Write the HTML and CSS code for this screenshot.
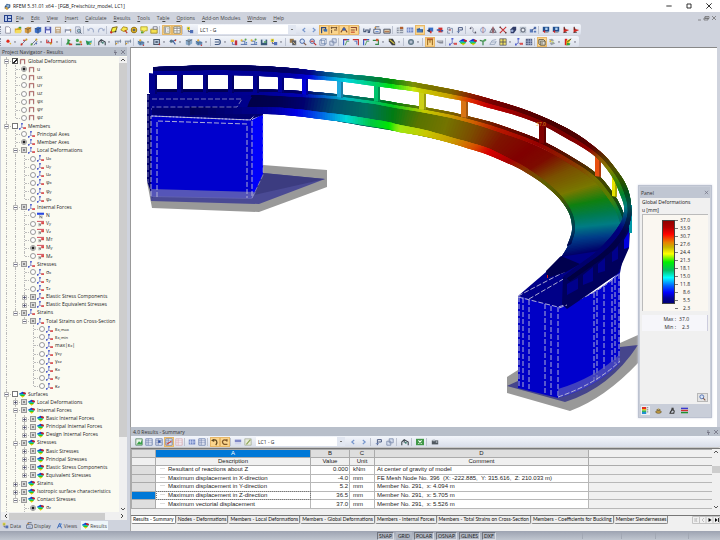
FILE: index.html
```html
<!DOCTYPE html>
<html lang="en">
<head>
<meta charset="utf-8">
<title>RFEM 5.31.01 x64 - [FGB_Freischütz_model, LC1]</title>
<link rel="stylesheet" href="styles.css">
</head>
<body>
<header class="titlebar">
  <svg class="logo" viewBox="0 0 10 10" aria-hidden="true"><path d="M1 5 4 1l5 1v4L5 9 1 8z" fill="#345a8c"/><path d="M3 3l4-1 1 3-3 2z" fill="#8fb0d0"/><path d="M1 7l3-2 2 4-2 1z" fill="#d9a33a"/></svg>
  <h1>RFEM 5.31.01 x64 - [FGB_Freischütz_model, LC1]</h1>
  <div class="window-buttons">
    <button aria-label="Minimize"><svg viewBox="0 0 6 6"><path d="M1 3h4" stroke="#222" stroke-width=".7"/></svg></button>
    <button aria-label="Maximize"><svg viewBox="0 0 6 6"><path d="M1.5 1.5h3v3h-3z" fill="none" stroke="#222" stroke-width=".7"/></svg></button>
    <button aria-label="Close"><svg viewBox="0 0 6 6"><path d="M1 1l4 4M5 1 1 5" stroke="#222" stroke-width=".7"/></svg></button>
  </div>
</header>
<nav class="menubar">
  <svg class="doc-logo" viewBox="0 0 8 7" aria-hidden="true"><path d="M0 0h8v7H0z" fill="#24408c"/><path d="M1 1h2v5H1zM4 1h3v2H4zM4 4h3v2H4z" fill="#b8c8e8"/></svg>
  <a href="#"><u>F</u>ile</a><a href="#"><u>E</u>dit</a><a href="#"><u>V</u>iew</a><a href="#"><u>I</u>nsert</a><a href="#"><u>C</u>alculate</a><a href="#"><u>R</u>esults</a><a href="#"><u>T</u>ools</a><a href="#">Ta<u>b</u>le</a><a href="#"><u>O</u>ptions</a><a href="#"><u>A</u>dd-on Modules</a><a href="#"><u>W</u>indow</a><a href="#"><u>H</u>elp</a>
  <span class="doc-buttons"><svg viewBox="0 0 20 6"><path d="M1 5h3M8 1.500h4v2H8zM7 3h4v2H7zM15 1l4 4M19 1l-4 4" fill="none" stroke="#666" stroke-width=".7"/></svg></span>
</nav>
<div class="toolbars">
  <div class="toolbar">
    <div class="tools" data-tools="| new open boxo boxb save calc print preview | undo redo | poly find globe note folder | *list *table | lc"></div>
    <select class="case" aria-label="Load case"><option>LC1 - G</option></select>
    <div class="tools" data-tools="prev next *xray *dims *loadx *values | glasses boxval boxval2 | grid mesh *view arrowb arrowr num flag | link circ tri cross cyl ring rel | panelb panelb pin pin"></div>
  </div>
  <div class="toolbar">
    <div class="tools" data-tools="| node . line line2 . load . | tree1 tree2 surf | struct . wave wave | solid . frame . axis . cube solid . | conn . lc2 dots dots book lc . | iso zoomin zoomout wire copy | corner1 corner2 corner1 corner3 . render . | gear . | *bars strip | axes rain rain green beam grid4 . axes grid5 | *cubey layers . spect ."></div>
  </div>
</div>
<div class="workspace">
  <aside class="navigator">
    <h2 class="pane-title">Project Navigator - Results<span class="pane-buttons"><svg viewBox="0 0 12 6"><path d="M2 1v3M1 3.500h3M2.500 4v2M8 1l4 4M12 1 8 5" stroke="#667" stroke-width=".7" fill="none"/></svg></span></h2>
    <div class="tree-area">
      <div class="tree" id="tree"></div>
      <div class="vscroll"><svg viewBox="0 0 8 6"><path d="M2 4l2-2 2 2" fill="none" stroke="#555"/></svg><i class="thumb"></i><svg viewBox="0 0 8 6"><path d="M2 2l2 2 2-2" fill="none" stroke="#555"/></svg></div>
    </div>
    <div class="hscroll"><svg viewBox="0 0 6 6"><path d="M4 1 2 3l2 2" fill="none" stroke="#444"/></svg><i class="thumb"></i><svg viewBox="0 0 6 6"><path d="M2 1l2 2-2 2" fill="none" stroke="#444"/></svg></div>
    <div class="nav-tabs">
      <button><svg data-icon="lc"></svg>Data</button><button><svg data-icon="boxval"></svg>Display</button><button><svg data-icon="camera"></svg>Views</button><button class="active"><svg data-icon="rain"></svg>Results</button>
    </div>
  </aside>
  <main class="main">
    <section class="viewport">
      <svg class="model" id="model" viewBox="131 48 586 380" preserveAspectRatio="xMinYMin meet" role="img" aria-label="Bridge deformation model"></svg>
      <div class="panel">
        <h2 class="panel-title">Panel<svg viewBox="0 0 6 6"><path d="M1 1l4 4M5 1 1 5" stroke="#667" stroke-width=".7"/></svg></h2>
        <div class="panel-body">
          <p>Global Deformations</p>
          <p>u [mm]</p>
          <div class="scale">
            <div class="bar"></div>
            <ol><li>37.0</li><li>33.9</li><li>30.7</li><li>27.6</li><li>24.4</li><li>21.3</li><li>18.1</li><li>15.0</li><li>11.8</li><li>8.6</li><li>5.5</li><li>2.3</li></ol>
          </div>
          <dl class="extremes"><dt>Max :</dt><dd>37.0</dd><dt>Min :</dt><dd>2.3</dd></dl>
          <button class="inspect" aria-label="Details"><svg data-icon="zoomin"></svg></button>
        </div>
        <div class="panel-tabs"><button class="active" aria-label="Color scale"><svg data-icon="scale"></svg></button><button aria-label="Factors"><svg data-icon="balance"></svg></button><button aria-label="Filter"><svg data-icon="scope"></svg></button><button aria-label="Lines"><svg data-icon="stripes"></svg></button></div>
      </div>
    </section>
    <section class="results">
      <h2 class="pane-title">4.0 Results - Summary<span class="pane-buttons"><svg viewBox="0 0 12 6"><path d="M2 1v3M1 3.500h3M2.500 4v2M8 1l4 4M12 1 8 5" stroke="#667" stroke-width=".7" fill="none"/></svg></span></h2>
      <div class="toolbar table-tools">
        <div class="tools" data-tools="chart sheet sheetd *sheetr sheetp | mesh sheet | *undoy *redoy | stripe pencil"></div>
        <select class="case" aria-label="Result case"><option>LC1 - G</option></select>
        <div class="tools spaced" data-tools="prev next | flag copy | struct | excel | scan"></div>
      </div>
      <div class="table-area">
        <table>
          <colgroup><col class="c-head"><col class="c-desc"><col class="c-value"><col class="c-unit"><col class="c-comment"><col></colgroup>
          <thead>
            <tr class="letters"><th></th><th class="selected">A</th><th>B</th><th>C</th><th>D</th><th></th></tr>
            <tr><th></th><th>Description</th><th>Value</th><th>Unit</th><th>Comment</th><th></th></tr>
          </thead>
          <tbody>
            <tr><th></th><td>Resultant of reactions about Z</td><td>0.000</td><td>kNm</td><td>At center of gravity of model</td><td></td></tr>
            <tr><th></th><td>Maximum displacement in X-direction</td><td>-4.0</td><td>mm</td><td>FE Mesh Node No. 396&nbsp; (X: -222.885,&nbsp; Y: 315.616,&nbsp; Z: 210.033 m)</td><td></td></tr>
            <tr><th></th><td>Maximum displacement in Y-direction</td><td>5.2</td><td>mm</td><td>Member No. 291,&nbsp; x: 4.094 m</td><td></td></tr>
            <tr class="current"><th></th><td>Maximum displacement in Z-direction</td><td>36.5</td><td>mm</td><td>Member No. 291,&nbsp; x: 5.705 m</td><td></td></tr>
            <tr><th></th><td>Maximum vectorial displacement</td><td>37.0</td><td>mm</td><td>Member No. 291,&nbsp; x: 5.526 m</td><td></td></tr>
          </tbody>
        </table>
        <div class="vscroll"><svg viewBox="0 0 8 6"><path d="M2 4l2-2 2 2" fill="none" stroke="#555"/></svg><i class="thumb"></i><svg viewBox="0 0 8 6"><path d="M2 2l2 2 2-2" fill="none" stroke="#555"/></svg></div>
      </div>
      <div class="sheet-tabs">
        <button class="active">Results - Summary</button><button>Nodes - Deformations</button><button>Members - Local Deformations</button><button>Members - Global Deformations</button><button>Members - Internal Forces</button><button>Members - Total Strains on Cross-Section</button><button>Members - Coefficients for Buckling</button><button>Member Slendernesses</button>
        <span class="pager"><svg viewBox="0 0 28 8"><path d="M.5.500h27v7H.5zM7.500.500v7M14 .500v7M21 .500v7" fill="none" stroke="#c4c4c4"/><path d="M3 2v4M5 2 4 4l1 2M12 2l-2 2 2 2" stroke="#aaa" fill="none" stroke-width=".7"/><path d="M16.500 2l3 2-3 2zM23 2l2.500 2L23 6zM26 2h.8v4H26z"/></svg></span>
      </div>
    </section>
  </main>
</div>
<footer class="status"><button>SNAP</button><button class="off">GRID</button><button>POLAR</button><button>OSNAP</button><button>GLINES</button><button>DXF</button><span></span><span></span><span></span><span></span></footer>
<script src="app.js"></script>
</body>
</html>
```
FILE: styles.css
```css
* { box-sizing: border-box; }
body {
  margin: 0;
  height: 100vh;
  display: flex;
  flex-direction: column;
  background: #cfd3dd;
  color: #222;
  font: 5px/8px "Open Sans", "Noto Sans", sans-serif;
  overflow: hidden;
}
h1, h2, p, ol, dl, dd { margin: 0; padding: 0; font: inherit; }
button { border: 0; padding: 0; background: none; font: inherit; color: inherit; }
svg { display: block; flex: none; }
a { color: inherit; text-decoration: none; }

.titlebar { display: flex; align-items: center; height: 12px; flex: none; padding: 0 4px; background: #fff; gap: 2px; color: #111; }
.logo { width: 7px; height: 7px; }
.window-buttons { margin-left: auto; display: flex; gap: 12px; padding-right: 3px; }
.window-buttons svg { width: 8px; height: 8px; }
.menubar { display: flex; align-items: center; height: 12px; flex: none; padding: 0 3px 0 4px; gap: 7px; color: #444; }
.doc-logo { width: 8px; height: 7px; margin-right: -3px; }
.doc-buttons { margin-left: auto; }
.doc-buttons svg { width: 20px; height: 6px; }

.toolbars { flex: none; height: 23px; }
.toolbar { display: flex; align-items: center; height: 11px; width: max-content; background: linear-gradient(#f3f6fb, #d9deea); border-radius: 0 2px 2px 0; margin-bottom: 1px; }
.tools { display: flex; align-items: center; }
.tools button { width: 10px; height: 10px; display: flex; align-items: center; justify-content: center; }
.tools svg { width: 8px; height: 8px; }
.tools .on { background: #fbd58c; border: 1px solid #e8b868; }
.tools i { width: 3px; height: 8px; border-left: 1px solid #bcc2d0; }
.tools i:first-child { border-left: 1px dotted #8890a4; }
.tools .drop { width: 6px; height: 8px; display: flex; align-items: center; }
.tools .drop svg { width: 4px; height: 4px; }
.spaced { gap: 1px; }
.case { appearance: none; border: 0; margin: 0 3px 0 3px; padding: 0 2px; width: 98px; height: 9px; color: #222; font: inherit; border-radius: 0;
  background: linear-gradient(#777, #777) right 3px center / 2px 1px no-repeat, linear-gradient(#e2e7f1, #e2e7f1) right / 8px no-repeat, #fff; }

.workspace { flex: 1; min-height: 0; display: flex; }
.navigator { width: 127px; flex: none; margin-right: 3px; display: flex; flex-direction: column; min-height: 0; }
.pane-title { display: flex; align-items: center; height: 9px; flex: none; padding: 0 2px; background: #b8bfca; color: #333; }
.pane-buttons { margin-left: auto; }
.pane-buttons svg { width: 12px; height: 6px; }
.tree-area { flex: 1; min-height: 0; display: flex; background: #fbfbf2; margin-left: 1px; padding-top: 1px; }
.tree { flex: 1; min-width: 0; display: grid; grid-auto-rows: 1fr; padding-left: 1px; overflow: hidden; }
.row { display: flex; align-items: center; min-height: 0; line-height: 7px; white-space: nowrap; color: #222; }
.guide { position: relative; width: 9px; align-self: stretch; flex: none; }
.guide.line::before { content: ""; position: absolute; left: 4px; top: 0; bottom: 0; border-left: 1px dotted #bbb; }
.guide.end::before { bottom: 50%; }
.guide.dash::after { content: ""; position: absolute; left: 5px; right: 0; top: 50%; border-top: 1px dotted #bbb; }
.twist { position: absolute; left: 2px; top: 2px; width: 5px; height: 5px; z-index: 1; }
.row input { appearance: none; flex: none; margin: 0 1px; width: 6px; height: 6px; border: 1px solid #777; background: #fff; }
.row input[type=radio] { border-radius: 50%; border-color: #999; }
.row input[type=radio]:checked { background: radial-gradient(circle, #222 0 1px, #fff 2px); }
.row input.mixed { background: #888; border-color: #999; box-shadow: inset 0 0 0 1px #d8d8d8; }
.row input[type=checkbox]:checked { background: linear-gradient(135deg, #fff 40%, #222 40% 65%, #fff 65%); border-color: #555; }
.row svg.icon { width: 7px; height: 7px; margin-right: 2px; }
.vscroll { width: 8px; flex: none; display: flex; flex-direction: column; background: #f0f0f0; }
.vscroll svg { width: 8px; height: 6px; }
.thumb { background: #cdcdcd; }
.tree-area .thumb { height: 374px; margin-bottom: auto; }
.hscroll { display: flex; align-items: center; height: 8px; margin-left: 1px; background: #f0f0f0; flex: none; padding: 0 2px; }
.hscroll svg { width: 6px; height: 6px; }
.hscroll .thumb { width: 96px; height: 7px; margin-right: auto; }
.nav-tabs { display: flex; align-items: center; gap: 3px; height: 11px; padding: 0 1px; flex: none; }
.nav-tabs button { display: flex; align-items: center; gap: 1px; height: 9px; padding: 0 1px; color: #444; }
.nav-tabs .active { background: #eef6fa; }
.nav-tabs svg { width: 7px; height: 7px; }

.main { flex: 1; min-width: 0; display: flex; flex-direction: column; }
.viewport { position: relative; flex: 1; min-height: 0; background: #fff; border-top: 1px solid #888; border-left: 1px solid #999; margin-right: 3px; overflow: hidden; }
.model { width: 100%; }
.panel { position: absolute; right: 5px; top: 137px; width: 74px; height: 233px; background: #c9ced9; border: 1px solid #bcc2d0; padding: 1px; display: flex; flex-direction: column; box-shadow: 0 0 2px #d0d4e4; }
.panel-title { display: flex; justify-content: space-between; align-items: center; height: 11px; padding: 0 1px; flex: none; background: #c0c6d2; color: #333; }
.panel-title svg { width: 5px; height: 5px; }
.panel-body { background: #f0f0f0; flex: 1; padding: 0 2px; display: flex; flex-direction: column; }
.panel-body p { line-height: 8px; color: #111; }
.scale { display: flex; height: 97px; margin-bottom: 4px; padding: 5px 0 7px 19px; background: #faf7f1; border-top: 1px solid #bbb; border-left: 1px solid #bbb; }
.bar { width: 13px; border: 1px solid #444; background: linear-gradient(#900000, #b40000 8%, #ff0000 16%, #e88000 26%, #c8b400 32%, #ffff00 40%, #00f000 50%, #00c060 60%, #00ffff 69%, #0060ff 79%, #0000ff 87%, #000098 94%, #000078); }
.scale ol { list-style: none; display: flex; flex-direction: column; justify-content: space-between; margin: -4px 0; }
.scale li { display: flex; align-items: center; justify-content: flex-end; width: 15px; line-height: 8px; }
.scale li::before { content: ""; width: 3px; border-top: 1px solid #777; margin-right: auto; }
.extremes { display: grid; grid-template-columns: 34px 13px; text-align: right; height: 16px; background: #f6f6fa; border-right: 1px solid #ccd; }
.inspect { margin: auto 0 2px auto; width: 11px; height: 9px; border: 1px solid #b8b8b8; background: #e4e4e4; display: flex; justify-content: center; align-items: center; }
.inspect svg { width: 7px; height: 7px; }
.panel-tabs { display: flex; gap: 4px; height: 12px; align-items: center; padding: 0 1px; }
.panel-tabs button { width: 9px; height: 9px; display: flex; align-items: center; justify-content: center; }
.panel-tabs .active { background: #eceef4; }
.panel-tabs svg { width: 7px; height: 7px; }

.results { flex: none; height: 104px; display: flex; flex-direction: column; border-left: 1px solid #aaa; background: #f0f0f0; }
.table-tools { width: auto; height: 12px; flex: none; padding-left: 3px; border-bottom: 1px solid #c8c8c8; margin: 0; }
.table-tools .case { width: 89px; }
.table-area { flex: none; height: 62px; display: flex; border-top: 1px solid #777; }
table { flex: 1; height: 60px; border-collapse: collapse; table-layout: fixed; font: 6px/7px "Liberation Sans", Arial, sans-serif; color: #222; }
.c-head { width: 24px; }
.c-desc { width: 155px; }
.c-value { width: 39px; }
.c-unit { width: 25px; }
.c-comment { width: 214px; }
th, td { padding: 0 3px; border: 1px solid #ababab; font-weight: normal; white-space: nowrap; }
th { background: #f0f0f0; }
.letters th, tbody th { background: #dedede; }
.letters .selected, .current th { background: #0078d7; color: #fff; }
td { background: #fff; border-color: #b8b8b8; }
td:last-child, th:last-child { background: #f0f0f0; border-right: 0; }
td:nth-child(2) { padding-left: 4px; }
td:nth-child(2)::before { content: ""; display: inline-block; width: 5px; margin-right: 3px; border-top: 1px solid #ddd; vertical-align: 2px; }
td:nth-child(3) { text-align: right; padding-right: 1px; }
td:nth-child(5) { padding-left: 2px; }
.current td:nth-child(2) { outline: 1px dotted #777; outline-offset: -1px; }
.table-area .thumb { height: 7px; margin: 11px 0 auto; }
.sheet-tabs { display: flex; align-items: flex-start; margin-top: 5px; flex: none; border-top: 1px solid #777; font: 5px/7px Lato, "Liberation Sans", sans-serif; color: #111; white-space: nowrap; }
.sheet-tabs button { height: 8px; padding: 0 1px; border: 1px solid #888; border-top: 0; border-left-color: #ddd; border-radius: 0 0 2px 2px; background: #eee; flex: none; }
.sheet-tabs .active { background: #fff; }
.pager { margin-left: auto; }
.pager svg { width: 28px; height: 8px; }
.status { flex: none; height: 9px; display: flex; align-items: center; gap: 2px; padding-left: 377px; background: linear-gradient(#9da3b1, #c0c6d0); font: 5px/6px Lato, "Liberation Sans", sans-serif; }
.status button { height: 8px; padding: 0 1px; border: 1px solid; border-color: #70747e #d8dce4 #d8dce4 #70747e; background: #b0b6c2; }
.status .off { border-color: transparent; }
.status span { width: 33px; height: 7px; border-left: 1px solid #a2a8b4; }
.status span:nth-of-type(1) { margin-left: 84px; }
.status span:nth-of-type(2) { margin-left: 6px; }
```
FILE: app.js
```js
// Icon artwork on a 10 x 10 grid
const sheet = '<path d="M1 1h8v8H1z" fill="#f4f6fc" stroke="#6478a8"/><path d="M1 3.500h8M1 6h8M4 1v8" stroke="#6478a8" stroke-width=".8"/>';
const dot = (x, y, c, r = 1.3) => `<circle cx="${x}" cy="${y}" r="${r}" fill="${c}"/>`;
const ln = (d, c, w = 1) => `<path d="${d}" fill="none" stroke="${c}" stroke-width="${w}"/>`;
const fl = (d, c) => `<path d="${d}" fill="${c}"/>`;
const box = c => fl('M1 3l4-2 4 1v5L5 9.500 1 8z', c) + ln('M1 3l4 1 4-2M5 4v5.500', '#333', .6);
const rain = fl('M0 4l5-3 5 2-1 2H1z', '#1434d0') + fl('M0 4h5l4 1-1 1.500H2z', '#18c0d0') + fl('M1 5.500h8L7 7.500H3z', '#30c820') + fl('M3 7h5L5 9.500z', '#e8c800') + fl('M6 1.500l4 1.500-1 2-3-1z', '#d82010');
const axes = ln('M4 1v5L1 8.500', '#5060c8') + ln('M4 6l3 1.500', '#8088b0') + fl('M6 6h4v2.500H6z', '#d85050') + fl('M0 7h2v2.500H0zM3 0h2.500v2H3z', '#5060d0');
const ICONS = {
  new: '<path d="M2 1h4l2 2v6H2z" fill="#fff" stroke="#889"/>',
  open: fl('M1 3h3l1-1h4v6H1z', '#d8a820') + fl('M2 5h8L8 9H1z', '#f4dc60') + fl('M6 1h3v2H6z', '#40a040'),
  boxo: box('#d89c40'), boxb: box('#3c70c8'),
  save: fl('M1 1h8v8H1z', '#5058b0') + fl('M3 1h4v3H3z', '#c8d0f0') + fl('M2.500 5.500h5V9h-5z', '#eef'),
  calc: fl('M1.500 1h7v8h-7z', '#b89870') + fl('M2.500 2h5v2h-5z', '#f8f0e0') + ln('M3 5.500h4M3 7.500h4', '#eee'),
  print: fl('M1 4h8v4H1z', '#8890a8') + fl('M3 1h4v3H3zM2.500 6h5v3h-5z', '#f4f6fc') + dot(8, 5, '#e8a030', .8),
  preview: fl('M2 1h5l1 2v6H2z', '#e4e8f4') + ln('M2 1h5l1 2v6H2z', '#8088a0', .8) + `<circle cx="6" cy="6" r="2" fill="#acd" stroke="#456" stroke-width=".8"/>` + ln('M7.500 7.500l2 2', '#456'),
  undo: ln('M2 5c2-4 7-2 6 3', '#a4b0cc', 1.4) + fl('M0 3l1 4 3-2z', '#a4b0cc'),
  redo: ln('M8 5C6 1 1 3 2 8', '#a4b0cc', 1.4) + fl('M10 3l-1 4-3-2z', '#a4b0cc'),
  poly: '<path d="M1 8l2-6 6-1-2 6z" fill="#f4f040" stroke="#806810" stroke-width="1.2"/>' + dot(1.5, 8, '#d02020') + dot(7, 7, '#303030', 1),
  find: '<path d="M1 5l3-4 5 1v3L5 7z" fill="#f8e850" stroke="#a08010"/>' + ln('M6 5l3 4', '#c03020', 1.4),
  globe: '<circle cx="5" cy="5" r="3.500" fill="#f0d040" stroke="#907010" stroke-width="1.2"/>' + ln('M5 2v6M2 5h6', '#a06010') + dot(5, 5, '#306090', 1.2),
  note: '<path d="M1 1h8v5H6L4 9V6H1z" fill="#f8f060" stroke="#b0a020"/>' + dot(2.5, 8, '#50a030'),
  folder: '<path d="M1 4h8v5H1z" fill="#f4e050" stroke="#a08820"/>' + '<path d="M4 1h5v3H4z" fill="#fff" stroke="#667"/>',
  list: '<path d="M1.500 1h7v8h-7z" fill="#fff" stroke="#886"/>' + fl('M2 1.500h2v7H2z', '#a0a0a8') + ln('M5 3h3M5 5h3M5 7h3', '#999', .7),
  table: '<path d="M1 1h8v8H1z" fill="#fff" stroke="#776"/>' + ln('M1 3h8M1 6h8M5 1v8', '#888'),
  lc: fl('M1 1h4v4H1z', '#f0d040') + dot(3, 3, '#50a050', 1) + fl('M5 5h4v4H5z', '#5070b8') + ln('M3 5v2h2', '#446'),
  lc2: fl('M1 2h4v3H1z', '#f0c040') + fl('M6 3h3v6H6z', '#c03040') + ln('M3 5v3h3', '#5060a0'),
  prev: ln('M6.500 2.500 3.500 5l3 2.500', '#7494cc', 1.4), next: ln('M3.500 2.500 6.500 5l-3 2.500', '#7494cc', 1.4),
  xray: ln('M2 9V2h5v3H4', '#304878', 1.5) + fl('M5 4h4v3H5z', '#3870b8'),
  dims: ln('M1 2h8M2 1v3M8 1v3M2 5v4M5 5h4', '#705030', 1.2),
  loadx: ln('M1 8l4-6 4 6', '#804828', 1.3) + dot(5, 4, '#4060a8', 2),
  values: ln('M1 2h7v4M1 5h5', '#904830', 1.3) + fl('M1 7h5v1.500H1z', '#c85030'),
  glasses: ln('M1 3v4h2.500V5h3v3H8l1-5', '#485878', 1.4),
  boxval: '<path d="M1 4h8v5H1z" fill="#e8ecf4" stroke="#3a4660"/>' + ln('M3 4V1h5', '#3a4660') + ln('M3 7h4', '#3868c0') + dot(3, 2, '#e09030', 1),
  boxval2: '<path d="M1 4h8v5H1z" fill="#d8c8a8" stroke="#3a4660"/>' + ln('M2 7h6', '#a85830'),
  grid: fl('M1 2h8v7H1z', '#8890a0') + ln('M1 4h8M1 7h8M4 2v7', '#e8ecf0') + fl('M5 1h4v3H5z', '#b06030'),
  mesh: fl('M1 2h8v6H1z', '#5870b8') + ln('M1 4h8M1 6h8M3 2v6M6 2v6', '#e0e8ff', .8),
  view: fl('M1 4l5-2 3 2-1 4H1z', '#4878b8') + ln('M1 4h7v4', '#284878') + fl('M5 1h4v3H5z', '#d8e8f8'),
  arrowb: fl('M3 2h6v5H3z', '#3870c8') + fl('M1 6l4-3v5z', '#303c60') + fl('M5 6h2v3H5z', '#c83030'),
  arrowr: fl('M3 2h5v6H3z', '#d03030') + fl('M1 4h4v2H1zM6 5h3v2H6z', '#3858a8'),
  num: ln('M2 2h3v3H2zM6 3h2v6M2 6v3h3', '#7080a0') + fl('M4 4h2v2H4z', '#c06060'),
  flag: ln('M3 9V2h5v3H4', '#485880', 1.2) + ln('M1 7h4', '#7088b8'),
  link: ln('M1 3c2-3 5-1 4 2s1 4 4 4', '#889', 1) + dot(2, 3, '#556', 1) + dot(8, 8, '#556', 1),
  circ: '<circle cx="5" cy="5" r="3" fill="none" stroke="#7894cc"/>' + ln('M5 1v8', '#c06050', .8),
  tri: ln('M5 1v8M4 3 1 8h3zM6 3l3 5H6z', '#556', 1) + ln('M5 1v8', '#c03030', .8),
  cross: ln('M1 1l8 8M9 1 1 9', '#c83030', 1.3) + dot(1.500, 1.500, '#404040', 1) + dot(8.500, 8.500, '#404040', 1),
  cyl: fl('M2 4l3-3h4v4L6 9H2z', '#303c68') + dot(4, 6, '#a0b0d8', 1.6),
  ring: fl('M1 1h8v8H1z', '#b8c0cc') + '<circle cx="5" cy="5" r="2.500" fill="#e8ecf4" stroke="#404858"/>',
  rel: fl('M1 4h4v4H1zM6 1h3v3H6zM6 6h3v2H6z', '#5878b8') + ln('M4 5l4-3', '#384878'),
  panelb: fl('M1 1h8v6H1z', '#1f4f90') + fl('M4 2h3v3H4z', '#b0d0f0') + fl('M1 7l3-2v4z', '#d02020') + ln('M4 8h4', '#888'),
  pin: fl('M2 1l3 3 4 1-4 2-3 2z', '#d02820') + ln('M2 8l4 0M3 1v4', '#333'),
  node: dot(5, 4, '#e02818', 2) + dot(8, 7, '#e0b030', 1),
  line: ln('M1 9l7-7', '#586078') + dot(2, 8, '#d03020') + dot(8, 2, '#d0a020') + dot(5, 3, '#d02020', 1),
  line2: ln('M1 9l7-7M5 9l4-5', '#586078') + dot(2, 8, '#58a040') + dot(8, 2, '#d0a020') + dot(8, 7, '#4870c0', 1),
  load: ln('M1 2v4h6V1', '#d03030', 1.4) + dot(6, 7, '#c89820') + dot(3, 4, '#506080', 1),
  tree1: fl('M3 1l4 2-2 2 3 3H1l2-3z', '#389848') + fl('M5 7h4v2H5z', '#d04030'),
  tree2: dot(3, 3, '#48a050', 2) + dot(7, 5, '#d09030', 1.5) + fl('M1 7h6v2H1z', '#308060') + dot(8, 8, '#d03030', 1),
  surf: fl('M1 3l4 1 4-1-2 6-5-1z', '#48b0a0') + fl('M1 3l5 3-3 3z', '#309048') + dot(7, 7, '#e0c030', 1),
  struct: ln('M1 9V5l3-3 5 3v4M4 2v4', '#384048', 1.3) + dot(6, 6, '#408070'),
  wave: ln('M1 4h8M2 4v5M5 4v3M8 2v4', '#78869c', 1.2) + dot(3, 7, '#e0a020', 1),
  solid: fl('M1 4l4-1 4 2v4H3L1 7z', '#7098c0') + ln('M1 4l3 2h5M4 6v3', '#385878', .8) + dot(4, 3, '#e8a830', 1.3) + dot(8, 9, '#d03030', .9),
  frame: '<path d="M1 2h7v6H1z" fill="#b8c8dc" stroke="#48586c" stroke-width="1.300"/>' + fl('M3 4h3v2H3z', '#405068') + dot(8, 8, '#c03030', 1),
  axis: ln('M1 4h4l3 4M5 4l4-2', '#4060a0', 1.4) + dot(3, 4, '#507088', 2) + dot(8, 3, '#d04030', 1),
  cube: box('#88a8c8'), conn: ln('M1 2h4c4 0 4 6 0 6H1M1 5h6', '#405880', 1.3),
  dots: ln('M1 8h8M2 4h4v4', '#5070a8', 1.2) + dot(7, 2, '#58a850') + dot(2, 3, '#e0b030') + dot(8, 6, '#4878c0', 1),
  book: fl('M1 2h8v7H1z', '#385878') + fl('M3 1h4v5H3z', '#d8e4f0') + fl('M5 4h3v2H5z', '#58a868'),
  iso: fl('M1 1h5v5H1z', '#98784c') + fl('M4 3h5v6H4z', '#585c64') + ln('M5 5l3 3', '#e0c080'),
  zoomin: '<circle cx="4" cy="4" r="2.800" fill="#d8e4f8" stroke="#4868a8" stroke-width="1.200"/>' + ln('M6 6l3 3', '#805848', 1.5),
  zoomout: '<circle cx="4" cy="4" r="2.800" fill="#f0d8d8" stroke="#4868a8" stroke-width="1.200"/>' + ln('M6 6l3 3M2 4h4', '#c02828', 1.4),
  wire: ln('M1 3h6v6H1zM3 1h6v6M1 3l2-2M7 3l2-2M7 9l2-2M3 1v6h6', '#6880a8', .8),
  copy: '<path d="M1 4h5v5H1zM4 1h5v5H4z" fill="#d8e0f0" stroke="#7888a8"/>',
  corner1: ln('M2 9V2h7', '#3858c8', 1.4) + ln('M2 2h4', '#c02828', 1.6) + ln('M4 9l2-5h3', '#389048'),
  corner2: ln('M1 2h7v7', '#c83030', 1.4) + ln('M3 4h3v4', '#3858b8'),
  corner3: ln('M1 3h7v5H4', '#388848', 1.4) + fl('M5 1h3v3H5z', '#d05030'),
  render: fl('M1 1h5l3 5v3H5L1 4z', '#404040') + ln('M2 2l6 5', '#e0d040', 1.5),
  gear: '<circle cx="5" cy="5" r="3" fill="#98a8b8" stroke="#607888" stroke-width="1.500"/>' + dot(5, 5, '#dde', 1),
  bars: ln('M2 9V2h6v7M5 2v4', '#a07028', 1.4) + ln('M1 1h8', '#c03020'),
  strip: fl('M1 3h8v4H5L1 5z', '#888c98') + ln('M2 4h6', '#eee', .7),
  axes, rain, green: ln('M5 9V4L1 3M5 4l4-2', '#388848', 1.5) + dot(7, 3, '#50a858'),
  beam: ln('M1 8l3-5 5-1M1 8h6l2-4M3 5h6', '#90a0b8', 1),
  grid4: '<path d="M1 1h8v8H1z" fill="#f0e060" stroke="#667"/>' + ln('M5 1v8M1 5h8', '#445'),
  grid5: fl('M1 1h8v8H1z', '#505c80') + ln('M1 4h8M1 7h8M4 1v8M7 1v8', '#b8c4e0', .8),
  cubey: '<path d="M1 2h6l2 2v5H3L1 7z" fill="#d8d8d0" stroke="#504830"/>' + ln('M3 4h6M3 4v5M5 5v3', '#504830', .8),
  layers: fl('M1 2l4-1 3 2-4 1zM2 6l5-1 2 2-5 2z', '#98a0a8') + dot(3, 4, '#e8c030') + dot(6, 5, '#b8d050', 1),
  spect: fl('M1 1h3v8H1z', '#d82020') + fl('M3 3l6-2-4 8H3z', '#e8d820') + fl('M4 6l4 1-1 2H3z', '#30a040') + ln('M4 5l5-4', '#222'),
  chart: '<path d="M1 1h8v8H1z" fill="#e8f4e8" stroke="#508060"/>' + fl('M2 8l3-4 2 2 2-4v6z', '#38a048'),
  sheet, sheetd: sheet + fl('M4 3h3v3H4z', '#3050a0'), sheetr: sheet + ln('M2 8l6-4', '#d04030', 1.4), sheetp: sheet.replaceAll('#6478a8', '#d8a8b0'),
  undoy: ln('M2 3c5-2 7 2 4 6', '#604820', 1.6) + fl('M0 3l4-2v4z', '#604820'), redoy: ln('M8 3c-6-2-8 2-4 5h4', '#805828', 1.6) + fl('M8 1v4L5 3z', '#805828'),
  stripe: fl('M1 2h8v3H1z', '#8088c8') + fl('M1 5h8v3H1z', '#d0d4ec'), pencil: '<path d="M1 1h8v8H1z" fill="#e8ecd8" stroke="#a8b0a0"/>' + ln('M3 8l5-6', '#88a050', 1.3),
  excel: fl('M0 1h10v8H0z', '#409848') + ln('M3 3l4 4M7 3 3 7', '#fff', 1.3), scan: fl('M1 3h8v5H1z', '#505860') + fl('M2 2h3v2H2zM6 4h2v2H6z', '#b0b8c0'),
  camera: ln('M2 9l3-7 3 7M3 6h4', '#3868b8', 1.4) + dot(7, 3, '#5888d0'),
  scale: fl('M0 0h6v4H0z', '#e03020') + fl('M0 3h6v2H0z', '#e8d020') + fl('M0 5h6v2H0z', '#20b040') + fl('M0 7h6v3H0z', '#2090d0') + ln('M7 1h2M7 4h2M7 7h2', '#555'),
  balance: '<ellipse cx="5" cy="7" rx="4" ry="2" fill="#c8a040" stroke="#605030"/>' + fl('M2 3h6L6 6H4z', '#807048') + dot(5, 3, '#c0a868'),
  scope: ln('M2 9h7M3 8l4-6M7 4c3 1 2 5 0 5', '#333', 1.5) + fl('M5 1h3v4H5z', '#444'),
  stripes: fl('M0 1h10v2H0z', '#3838d0') + fl('M0 4h10v2H0z', '#d03030') + fl('M0 7h10v2H0z', '#209030'),
  portal: ln('M2 9V2.500h6V9', '#a09090', 1.6) + ln('M2.500 8V2h5.500V8', '#c05050', .8),
  force: ln('M0 2h10', '#c83040', 1.2) + fl('M6 3h4v3H6z', '#d84848') + ln('M3 9V5l2 3V5', '#555', .9),
  normal: fl('M0 1h10v3H0z', '#2848e0') + ln('M4 9V5l3 4V5', '#555', .9)
};
document.querySelectorAll('[data-icon]').forEach(s => { s.setAttribute('viewBox', '0 0 10 10'); s.innerHTML = ICONS[s.dataset.icon]; });

document.querySelectorAll('[data-tools]').forEach(bar => {
  bar.innerHTML = bar.dataset.tools.split(' ').map(t => {
    if (t === '|') return '<i></i>';
    if (t === '.') return '<span class="drop"><svg viewBox="0 0 4 4"><path d="M1 1.500h2L2 3z" fill="#556"/></svg></span>';
    const on = t[0] === '*', name = on ? t.slice(1) : t;
    return `<button class="${on ? 'on' : ''}" aria-label="${name}"><svg viewBox="0 0 10 10">${ICONS[name]}</svg></button>`;
  }).join('');
});

// Tree rows: level, control (c checked, e empty, m mixed, r radio, s selected radio), icon, text, expander
const rows = [[0, 'c', 'portal', 'Global Deformations', '-']];
const radios = (level, icon, names, sel = -1) => names.forEach((n, i) => rows.push([level, i === sel ? 's' : 'r', icon, n, '']));
radios(1, 'portal', ['u', 'u<small>X</small>', 'u<small>Y</small>', 'u<small>Z</small>', 'φ<small>X</small>', 'φ<small>Y</small>', 'φ<small>Z</small>'], 0);
rows.push([0, 'e', 'axes', 'Members', '-']);
radios(1, 'axes', ['Principal Axes', 'Member Axes'], 1);
rows.push([1, 'm', 'axes', 'Local Deformations', '-']);
radios(2, 'axes', ['u<small>x</small>', 'u<small>y</small>', 'u<small>z</small>', 'φ<small>x</small>', 'φ<small>y</small>', 'φ<small>z</small>']);
rows.push([1, 'm', 'axes', 'Internal Forces', '-']);
radios(2, 'normal', ['N']);
radios(2, 'force', ['V<small>y</small>', 'V<small>z</small>', 'M<small>T</small>', 'M<small>y</small>', 'M<small>z</small>'], 3);
rows.push([1, 'm', 'axes', 'Stresses', '-']);
radios(2, 'axes', ['σ<small>x</small>', 'τ<small>y</small>', 'τ<small>z</small>']);
rows.push([2, 'm', 'axes', 'Elastic Stress Components', '+'], [2, 'm', 'axes', 'Elastic Equivalent Stresses', '+'],
  [1, 'm', 'axes', 'Strains', '-'], [2, 'm', 'axes', 'Total Strains on Cross-Section', '-']);
radios(3, 'axes', ['ε<small>x,max</small>', 'ε<small>x,min</small>', 'max|ε<small>x</small>|', 'γ<small>xy</small>', 'γ<small>xz</small>', 'κ<small>x</small>', 'κ<small>y</small>', 'κ<small>z</small>']);
rows.push([0, 'e', 'rain', 'Surfaces', '-'], [1, 'm', 'rain', 'Local Deformations', '+'], [1, 'm', 'rain', 'Internal Forces', '-'],
  [2, 'm', 'rain', 'Basic Internal Forces', '+'], [2, 'm', 'rain', 'Principal Internal Forces', '+'], [2, 'm', 'rain', 'Design Internal Forces', '+'],
  [1, 'm', 'rain', 'Stresses', '-'], [2, 'm', 'rain', 'Basic Stresses', '+'], [2, 'm', 'rain', 'Principal Stresses', '+'],
  [2, 'm', 'rain', 'Elastic Stress Components', '+'], [2, 'm', 'rain', 'Equivalent Stresses', '+'],
  [1, 'm', 'rain', 'Strains', '+'], [1, 'm', 'rain', 'Isotropic surface characteristics', '+'], [1, 'm', 'rain', 'Contact Stresses', '-'],
  [2, 's', 'rain', 'σ<small>z</small>', '']);
const more = (i, level) => {
  for (let j = i + 1; j < rows.length; j++) { if (rows[j][0] < level) return false; if (rows[j][0] === level) return true; }
  return level !== 1;
};
document.getElementById('tree').innerHTML = rows.map(([level, kind, icon, text, twist], i) => {
  let g = '';
  for (let k = 0; k < level; k++) g += `<span class="guide ${k === 0 || more(i, k) ? 'line' : ''}"></span>`;
  const t = twist ? `<svg class="twist" viewBox="0 0 5 5"><path d="M.5.500h4v4h-4z" fill="#fff" stroke="#999" stroke-width=".7"/><path d="M1 2.500h3${twist === '+' ? 'M2.500 1v3' : ''}" stroke="#335" stroke-width=".7"/></svg>` : '';
  g += `<span class="guide line dash ${more(i, level) ? '' : 'end'}">${t}</span>`;
  const radio = kind === 'r' || kind === 's';
  const input = `<input type="${radio ? 'radio' : 'checkbox'}"${kind === 's' || kind === 'c' ? ' checked' : ''}${kind === 'm' ? ' class="mixed"' : ''}>`;
  return `<label class="row">${g}${input}<svg class="icon" viewBox="0 0 10 10">${ICONS[icon]}</svg><span>${text}</span></label>`;
}).join('');

// Colour ribbons: each knot is x1, y1, x2, y2, colour
const rgb = h => [1, 3, 5].map(p => parseInt(h.slice(p, p + 2), 16));
const spline = (a, b, c, d, t) => .5 * (2 * b + (c - a) * t + (2 * a - 5 * b + 4 * c - d) * t * t + (3 * b - a - 3 * c + d) * t * t * t);
function ribbon(knots, from = 0, to = 1, shade = 1) {
  const pts = [];
  for (let i = 0; i < knots.length - 1; i++) {
    const q = [knots[Math.max(i - 1, 0)], knots[i], knots[i + 1], knots[Math.min(i + 2, knots.length - 1)]];
    const c0 = rgb(q[1][4]), c1 = rgb(q[2][4]);
    for (let s = 0; s < 10; s++) {
      const t = s / 10, p = [0, 1, 2, 3].map(k => spline(q[0][k], q[1][k], q[2][k], q[3][k], t));
      pts.push([p, c0.map((v, k) => Math.round((v + (c1[k] - v) * t) * shade))]);
    }
  }
  const last = knots[knots.length - 1];
  pts.push([last.slice(0, 4), rgb(last[4]).map(v => Math.round(v * shade))]);
  const at = (p, f) => (p[0] + (p[2] - p[0]) * f).toFixed(1) + ' ' + (p[1] + (p[3] - p[1]) * f).toFixed(1);
  // Each strip reaches two steps ahead, so that the next one covers its edge
  return pts.slice(0, -1).map(([o, c], i) => {
    const p = pts[Math.min(i + 3, pts.length - 1)][0], m = pts[i + 1][0];
    return `<path d="M${at(o, from)}L${at(m, from)}L${at(p, from)}L${at(p, to)}L${at(m, to)}L${at(o, to)}z" fill="rgb(${c})"/>`;
  }).join('');
}
const deck = [[245, 114, 252, 93, '#000048'], [275, 114, 275, 94, '#000050'], [300, 116, 303, 96, '#00006e'], [330, 120, 335, 98, '#00506e'], [365, 126, 365, 102, '#007060'], [390, 130, 392, 106, '#007c14'], [412, 134, 420, 111, '#587400'], [440, 140, 447, 116, '#747400'], [465, 147, 475, 123, '#7c4c00'], [487, 154, 503, 132, '#7f1400'], [508, 163, 532, 144, '#800000'], [525, 171, 553, 154, '#7d0c00'], [540, 181, 575, 166, '#7a5000'], [556, 195, 598, 182, '#787800'], [565, 206, 611, 197, '#108010'], [571, 217, 618, 211, '#007c50'], [573, 227, 622, 222, '#007c84'], [571, 239, 620, 234, '#003c88'], [562, 256, 606, 248, '#000068'], [548, 272, 590, 264, '#00005c']];
const girder = [[190, 107, 190, 115, '#000058'], [263, 107, 263, 114, '#000096'], [295, 109, 295, 116, '#0000e6'], [320, 112, 320, 119, '#0064e6'], [345, 115, 345, 122, '#00d8d8'], [370, 119, 370, 126, '#00c840'], [388, 122, 388, 129, '#00e600'], [400, 125, 399, 132, '#a0e610'], [425, 130, 423, 136, '#c8c800'], [450, 137, 447, 142, '#c8a000'], [475, 144, 470, 149, '#d85000'], [490, 149, 486, 154, '#d80000'], [510, 159, 505, 162, '#a80000'], [525, 167, 520, 169, '#8c3000'], [545, 181, 542, 183, '#606000'], [562, 197, 559, 198, '#505800'], [572, 213, 569, 213, '#005030'], [575, 229, 572, 230, '#003c60'], [571, 244, 567, 246, '#000050']];
const beam = [[150, 89, 150, 96, '#00008c'], [220, 89, 220, 96, '#00008c'], [260, 89, 260, 95, '#000096'], [300, 91, 300, 97, '#0000b4'], [325, 93, 325, 98, '#0068c8'], [345, 95, 345, 100, '#00b8c4'], [375, 99, 375, 104, '#00c060'], [392, 102, 391, 107, '#00c81e'], [423, 107, 421, 112, '#c4cc00'], [450, 112, 447, 117, '#c8a000'], [475, 118, 471, 123, '#d06000'], [500, 125, 496, 131, '#b81800'], [540, 140, 535, 145, '#940000'], [570, 156, 565, 161, '#8c2800'], [597, 174, 592, 179, '#787000'], [613, 193, 608, 198, '#508000'], [621, 207, 616, 211, '#008040'], [625, 218, 620, 222, '#006080']];
const rail = [[153, 67, 153, 75, '#000096'], [183, 66, 183, 75, '#000096'], [220, 65, 220, 75, '#000096'], [260, 66, 260, 76, '#000098'], [290, 68, 290, 78, '#0000a8'], [308, 70, 308, 79, '#0000dc'], [325, 72, 325, 80, '#0078dc'], [345, 74, 345, 82, '#00d4dc'], [375, 77, 375, 86, '#00d060'], [390, 79, 390, 88, '#00e010'], [412, 82, 412, 91, '#c8e810'], [423, 84, 423, 93, '#c8c800'], [450, 89, 448, 98, '#c8a000'], [472, 94, 469, 102, '#e02c00'], [490, 99, 486, 107, '#c40000'], [520, 108, 515, 115, '#940000'], [550, 120, 542, 125, '#780000'], [575, 133, 566, 138, '#7c0000'], [592, 145, 585, 149, '#940000'], [605, 156, 597, 158, '#905000'], [615, 168, 606, 168, '#808000'], [624, 181, 614, 180, '#408400'], [629, 193, 620, 194, '#008430'], [631, 205, 624, 206, '#008080'], [631, 217, 623, 217, '#00407c'], [626, 233, 618, 227, '#000080'], [616, 247, 608, 240, '#000074'], [603, 258, 595, 253, '#000070'], [586, 270, 580, 264, '#00006c'], [570, 281, 564, 276, '#000068']];
const P = (d, c, o = 1) => `<path d="${d}" fill="${c}" opacity="${o}"/>`;
const dash = (d, o = .9) => `<path d="${d}" fill="none" stroke="#c0c0d8" stroke-width="1" stroke-dasharray="5 2" opacity="${o}"/>`;
const posts = [[149, 157, 73, 93, '#000090'], [177, 183, 73, 92, '#000088'], [203, 208, 73, 92, '#000088'], [228, 234, 73, 92, '#000088'], [253, 259, 74, 92, '#000090'], [278, 284, 75, 92, '#0000a0'], [302, 308, 76, 94, '#0000d8'], [337, 343, 79, 97, '#20a8dc'], [374, 380, 84, 101, '#00c46c'], [419, 426, 90, 109, '#ccd018'], [461, 468, 99, 117, '#d87414'], [539, 546, 121, 143, '#800000'], [595, 601, 154, 176, '#e85010'], [612, 617, 177, 196, '#e8e400']];
document.getElementById('model').innerHTML =
  // left support
  P('M147 182 152 208 259 212 327 187V170L263 165z', '#999') +
  P('M150 189 200 188 263 173 325 179 259 204 151 201z', '#4a4a94') +
  P('M263 173 325 179 250 196z', '#3c3c80') +
  P('M147 94h6v104l-6-17z', '#00006c') + P('M150 94h102v27H150z', '#00008c') +
  P('M151 115 252 120V198l-101-2z', '#0000cd') + P('M252 120 263 114V174l-11 24z', '#0000fa') +
  P('M151 189 256 192 252 199 151 197z', '#6464b4', .85) +
  dash('M157 197V121l90 3v74M151 196V116l101 4v78') + dash('M252 198l11-23V115', .5) +
  dash('M151 109h45M148 95v88', .6) +
  P('M152 108 240 107 263 107V115L252 119 152 115z', '#000070') + dash('M152 116l98 4 5-5') +
  // right foundation
  P('M507 377 518 370 560 382 620 343 638 335V363Q605 398 570 411L507 393z', '#999') +
  P('M507 386 520 380 575 384 620 347 638 345Q610 388 565 402z', '#45458c') +
  ribbon(deck) + ribbon(girder) + ribbon(beam) + ribbon(beam, 0, .4, .6) +
  posts.map(([a, b, y, z, c]) => P(`M${a} ${y}L${b} ${y + 1}V${z + 1}L${a} ${z}z`, c) + P(`M${b - 2} ${y}h2v${z - y + 1}h-2z`, '#000', .25)).join('') +
  P('M151 97 252 97 246 107 151 107z', '#00008c') + dash('M152 99h90l-5 8h-85', .6) +
  // pier and railing in front
  P('M518 296 546 272 547 271 560 257 625 247 620 273 560 309z', '#000088') +
  P('M518 296 558 307V398L518 388z', '#0000c6') + P('M558 307Q596 296 620 272V363Q595 388 558 398z', '#0000cd') +
  dash('M518 297l40 10Q596 296 620 273M518 296 566 271M529 299 572 274') +
  dash('M519 297v91M523 298v91M529 300v91M545 304v91M551 306v90M558 307v91') +
  dash('M594 293v88M597 291v89M604 287v84M612 280v84M615 278v86M619 274v89') +
  P('M558 389Q595 378 620 354V363Q595 388 558 398z', '#6464b4', .65) + dash('M558 397Q596 384 620 361') +
  P('M546 271 561 256 580 264 566 272 547 278z', '#00004e') +
  P('M563 277 600 255 622 230 631 212 629 248 618 273Q598 288 567 309L562 304z', '#00005c') +
  P('M567 284 578 278V289L567 295zM583 275 593 267V281L583 285zM598 264 605 258V271L598 273zM612 252 618 246V259L612 262zM624 240 629 230V248L624 249z', '#00008c') +
  P('M624 240 629 232V247L624 249z', '#0000e0') +
  P('M629 205h3v28h-3z', '#0098a8') + P('M547 275h1v3h-1z', '#e01818') + dash('M559 308l8-3') +
  ribbon(rail) + ribbon(rail, 0, .5, .62) +
  '<text x="541" y="126" text-anchor="middle" font-size="5" fill="#e8a020">37.0</text>';
```
